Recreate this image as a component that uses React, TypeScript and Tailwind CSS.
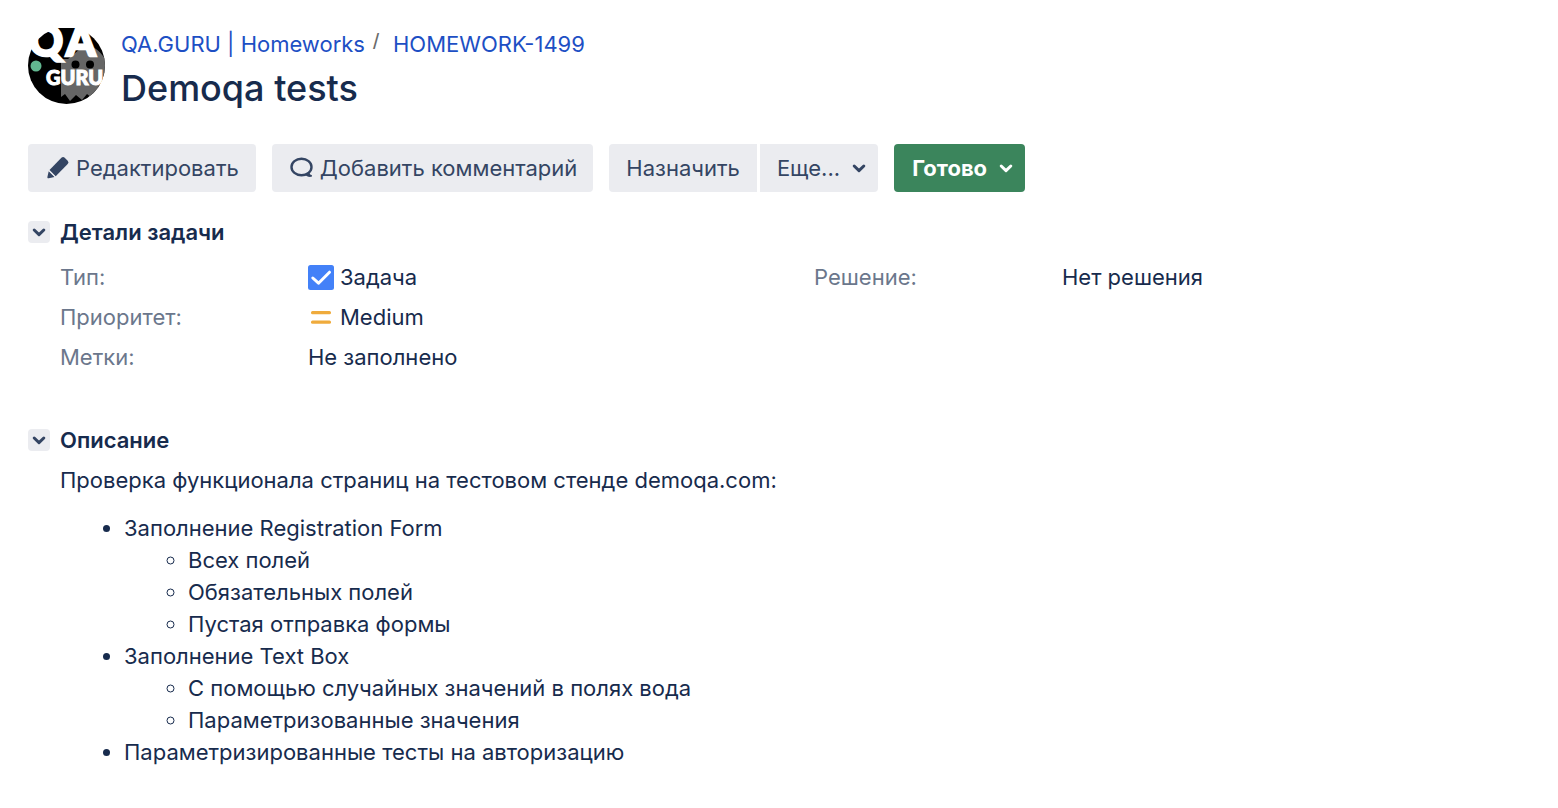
import type { ReactNode } from 'react';

function Chevron() {
  return (
    <svg width="14" height="14" viewBox="0 0 14 14" fill="none" aria-hidden="true">
      <path d="M2.2 5 7 9.6 11.8 5" stroke="currentColor" strokeWidth="3" strokeLinecap="round" strokeLinejoin="round" />
    </svg>
  );
}

function Pencil() {
  return (
    <svg width="24" height="24" viewBox="0 0 24 24" fill="currentColor" aria-hidden="true">
      <path d="M15.4 1.8a2.4 2.4 0 0 1 3.3 0l3 3a2.4 2.4 0 0 1 0 3.3L9.7 20.2 3.5 14Z" />
      <path d="M2.7 15.2 8.5 21 2.7 22.2c-.9.2-1.5-.4-1.3-1.3Z" />
      <path d="m2.7 14.4 6.6 6.6" stroke="#ebecf0" strokeWidth="0.8" />
    </svg>
  );
}

function Bubble() {
  return (
    <svg width="24" height="24" viewBox="0 0 24 24" fill="none" aria-hidden="true">
      <ellipse cx="11.5" cy="11" rx="10" ry="8.3" stroke="currentColor" strokeWidth="2.4" />
      <path d="M19.6 15.5c-.3 2.3.5 3.3 2 3.6.5.2.5 1.7-.1 1.7-2.9.4-5.2-.3-6.5-2.5Z" fill="currentColor" />
    </svg>
  );
}

function Avatar() {
  return (
    <svg width="77" height="77" viewBox="0 0 77 77" role="img" aria-label="QA.GURU" className="shrink-0 overflow-visible">
      <defs>
        <clipPath id="avatar-circle">
          <circle cx="38.5" cy="37.5" r="38.5" />
        </clipPath>
      </defs>
      <g clipPath="url(#avatar-circle)">
        <rect width="77" height="77" fill="#000" />
        <path d="M33 69V31h7l18-15c9 3 15 8 19 15v36l-9-1-4 4-5-4-5 6-6-5-6 6-5-7Z" fill="#666" />
        <circle cx="8" cy="38" r="5.5" fill="#62b890" />
        <circle cx="47.5" cy="36.500" r="4" fill="#000" />
        <circle cx="62" cy="36.500" r="4" fill="#000" />
      </g>
      <g fill="#fff" stroke="#fff" fontFamily="Lato, sans-serif" fontWeight="900">
        <text x="1" y="28" strokeWidth="2.5" fontSize="42">Q</text>
        <text x="38" y="28" strokeWidth="2.5" fontSize="42">A</text>
        <text x="18" y="57" strokeWidth="1" fontSize="20">GURU</text>
      </g>
    </svg>
  );
}

function Section({ title, children }: { title: string; children: ReactNode }) {
  return (
    <section>
      <h2 className="flex items-center gap-2.5 text-[22px] leading-8 font-semibold">
        <button type="button" aria-label={title} className="flex size-[22px] items-center justify-center rounded bg-[#ebecf0] text-[#344563]">
          <Chevron />
        </button>
        {title}
      </h2>
      <div className="pl-8">{children}</div>
    </section>
  );
}

function Field({ label, children }: { label: string; children: ReactNode }) {
  return (
    <div className="flex py-1">
      <dt className="w-62 shrink-0 text-[#6b778c]">{label}</dt>
      <dd className="flex items-center gap-1.5">{children}</dd>
    </div>
  );
}

const buttonStyle = 'flex h-12 items-center bg-[#ebecf0] text-[#344563]';

export default function App() {
  return (
    <main className="bg-white px-7 pt-7 pb-10 font-['Inter','Liberation_Sans',sans-serif] text-[22px] leading-8 text-[#172b4d]">
      <header className="flex gap-4">
        <Avatar />
        <div>
          <nav aria-label="Breadcrumb" className="flex text-[#1d4fc4]">
            <a href="#project">QA.GURU | Homeworks</a>
            <span className="w-7 pl-2 font-['Liberation_Sans',sans-serif] text-[22px] leading-7 text-[#6b6b6b]">/</span>
            <a href="#issue">HOMEWORK-1499</a>
          </nav>
          <h1 className="text-4xl leading-14 font-medium">Demoqa tests</h1>
        </div>
      </header>

      <div className="mt-7 flex flex-wrap gap-4">
        <button type="button" className={`${buttonStyle} gap-1.5 rounded pr-[17px] pl-[18px]`}>
          <Pencil />
          Редактировать
        </button>
        <button type="button" className={`${buttonStyle} gap-1.5 rounded pr-4 pl-[18px]`}>
          <Bubble />
          Добавить комментарий
        </button>
        <div className="flex gap-[3px]">
          <button type="button" className={`${buttonStyle} rounded-l px-[17px]`}>Назначить</button>
          <button type="button" className={`${buttonStyle} gap-3 rounded-r pr-3 pl-[17px]`}>
            Еще...
            <Chevron />
          </button>
        </div>
        <button type="button" className="flex h-12 items-center gap-3 rounded bg-[#3b855c] pr-3 pl-[18px] font-bold text-white">
          Готово
          <Chevron />
        </button>
      </div>

      <div className="mt-6">
        <Section title="Детали задачи">
          <dl className="mt-[9px] grid grid-cols-[754fr_716fr]">
            <div>
              <Field label="Тип:">
                <svg width="26" height="26" viewBox="0 0 26 26" fill="none" aria-hidden="true">
                  <rect y="1" width="26" height="25" rx="2.5" fill="#4381f8" />
                  <path d="m4.8 14 5.7 5.2L21.5 8.2" stroke="#fff" strokeWidth="3" strokeLinecap="round" strokeLinejoin="round" />
                </svg>
                Задача
              </Field>
              <Field label="Приоритет:">
                <svg width="26" height="26" viewBox="0 0 26 26" aria-hidden="true">
                  <rect x="3" y="7" width="20" height="3.3" rx="1.5" fill="#efab3c" />
                  <rect x="3" y="16.5" width="20" height="3.3" rx="1.5" fill="#efab3c" />
                </svg>
                Medium
              </Field>
              <Field label="Метки:">Не заполнено</Field>
            </div>
            <div>
              <Field label="Решение:">Нет решения</Field>
            </div>
          </dl>
        </Section>
      </div>

      <div className="mt-[47px]">
        <Section title="Описание">
          <p className="mt-2">Проверка функционала страниц на тестовом стенде demoqa.com:</p>
          <ul className="mt-4 list-disc pl-16">
            <li>
              Заполнение Registration Form
              <ul className="list-[circle] pl-16">
                <li>Всех полей</li>
                <li>Обязательных полей</li>
                <li>Пустая отправка формы</li>
              </ul>
            </li>
            <li>
              Заполнение Text Box
              <ul className="list-[circle] pl-16">
                <li>С помощью случайных значений в полях вода</li>
                <li>Параметризованные значения</li>
              </ul>
            </li>
            <li>Параметризированные тесты на авторизацию</li>
          </ul>
        </Section>
      </div>
    </main>
  );
}
